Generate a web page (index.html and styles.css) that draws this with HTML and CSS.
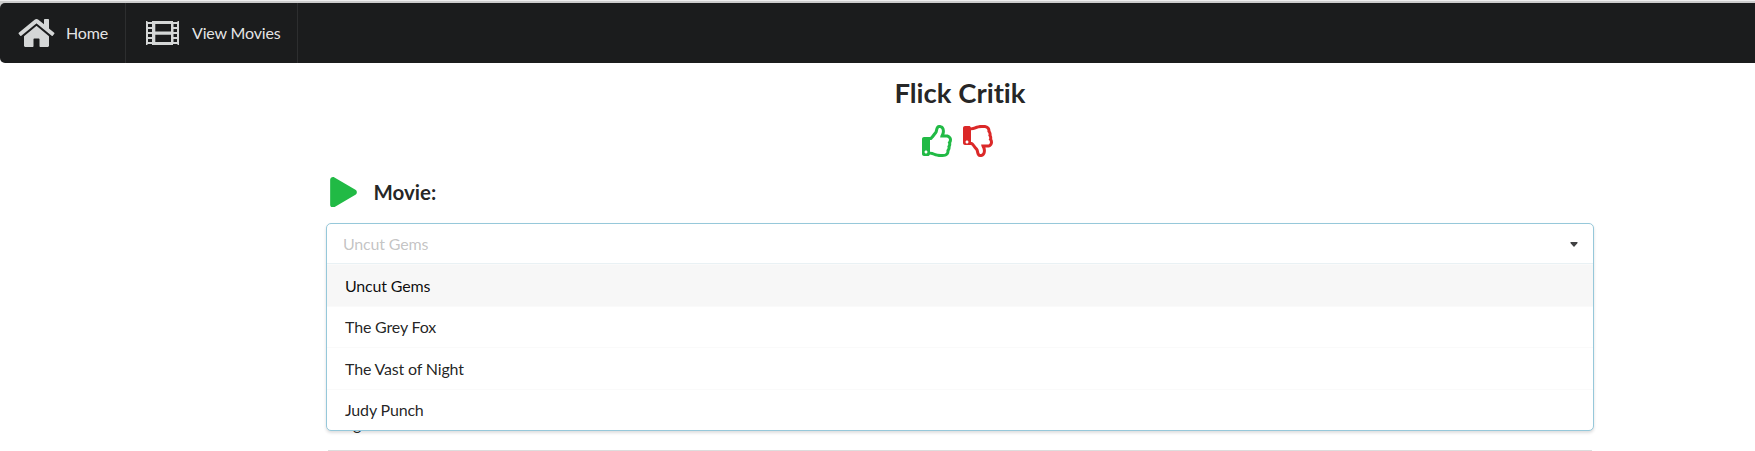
FILE: index.html
```html
<!DOCTYPE html>
<html lang="en">
<head>
<meta charset="utf-8">
<title>Flick Critik</title>
<link rel="stylesheet" href="styles.css">
</head>
<body>
<nav class="menu">
  <a class="item home">
    <svg class="icon-home" viewBox="0 0 576 512"><path d="M488 312.7V456c0 13.3-10.7 24-24 24H348c-6.600 0-12-5.400-12-12V356c0-6.600-5.400-12-12-12h-72c-6.600 0-12 5.400-12 12v112c0 6.600-5.400 12-12 12H112c-13.300 0-24-10.700-24-24V312.700c0-3.600 1.600-7 4.400-9.300l188-154.800c4.400-3.600 10.800-3.600 15.300 0l188 154.800c2.700 2.300 4.300 5.700 4.300 9.300zm83.600-60.900L488 182.900V44.400c0-6.600-5.400-12-12-12h-56c-6.600 0-12 5.400-12 12V117l-89.500-73.700c-17.700-14.600-43.300-14.600-61 0L4.400 251.800c-5.100 4.200-5.800 11.800-1.600 16.900l25.500 31c4.200 5.100 11.800 5.800 16.900 1.600l235.200-193.700c4.400-3.600 10.800-3.600 15.300 0l235.200 193.700c5.100 4.200 12.700 3.500 16.900-1.600l25.500-31c4.200-5.200 3.400-12.700-1.700-16.900z"/></svg>
    <span>Home</span>
  </a>
  <a class="item movies">
    <svg class="icon-film" viewBox="0 0 33 24"><path fill-rule="evenodd" d="M0 0H1.500V1H6V0H27V1H31.500V0H33V24H31.500V23H27V24H6V23H1.500V24H0ZM2 3V6H6V3ZM2 8V11H6V8ZM2 13V16H6V13ZM2 18V21H6V18ZM27.500 3V6H31V3ZM27.500 8V11H31V8ZM27.500 13V16H31V13ZM27.500 18V21H31V18ZM9.300 3V10.500H25V3ZM9.300 13.700V21H25V13.700Z"/></svg>
    <span>View Movies</span>
  </a>
</nav>
<main class="page">
  <h1 class="title">Flick Critik</h1>
  <div class="thumbs">
    <svg class="thumb up" viewBox="0 0 512 512"><path d="M466.270 286.690C475.040 271.840 480 256 480 236.850c0-44.015-37.218-85.580-85.820-85.580H357.700c4.920-12.810 8.850-28.130 8.850-46.540C366.550 31.936 328.860 0 271.280 0c-61.607 0-58.093 94.933-71.760 108.600-22.747 22.747-49.615 66.447-68.760 83.400H32c-17.673 0-32 14.327-32 32v240c0 17.673 14.327 32 32 32h64c14.893 0 27.408-10.174 30.978-23.950 44.509 1.001 75.060 39.940 177.802 39.940 7.220 0 15.220.010 22.220.010 77.117 0 111.986-39.423 112.940-95.330 13.319-18.425 20.299-43.122 17.340-66.999 9.854-18.452 13.664-40.343 8.990-62.990zm-61.750 53.830c12.560 21.130 1.260 49.410-13.940 57.570 7.700 48.780-17.608 65.900-53.120 65.900h-37.820c-71.639 0-118.029-37.820-171.640-37.820V240h10.920c28.360 0 67.980-70.890 94.540-97.460 28.360-28.360 18.910-75.630 37.820-94.540 47.270 0 47.270 32.980 47.270 56.730 0 39.170-28.360 56.720-28.360 94.540h103.990c21.110 0 37.730 18.910 37.820 37.820.090 18.900-12.820 37.810-22.270 37.810 13.489 14.555 16.371 45.236-5.210 65.620zM88 432c0 13.255-10.745 24-24 24s-24-10.745-24-24 10.745-24 24-24 24 10.745 24 24z"/></svg>
    <svg class="thumb down" viewBox="0 0 512 512"><path transform="matrix(1 0 0 -1 0 512)" d="M466.270 286.690C475.040 271.840 480 256 480 236.850c0-44.015-37.218-85.580-85.820-85.580H357.700c4.920-12.810 8.850-28.130 8.850-46.540C366.550 31.936 328.860 0 271.280 0c-61.607 0-58.093 94.933-71.760 108.600-22.747 22.747-49.615 66.447-68.760 83.400H32c-17.673 0-32 14.327-32 32v240c0 17.673 14.327 32 32 32h64c14.893 0 27.408-10.174 30.978-23.950 44.509 1.001 75.060 39.940 177.802 39.940 7.220 0 15.220.010 22.220.010 77.117 0 111.986-39.423 112.940-95.330 13.319-18.425 20.299-43.122 17.340-66.999 9.854-18.452 13.664-40.343 8.990-62.990zm-61.750 53.830c12.560 21.130 1.260 49.410-13.940 57.570 7.700 48.780-17.608 65.900-53.120 65.900h-37.820c-71.639 0-118.029-37.820-171.640-37.820V240h10.920c28.360 0 67.980-70.890 94.540-97.460 28.360-28.360 18.910-75.630 37.820-94.540 47.270 0 47.270 32.980 47.270 56.730 0 39.170-28.360 56.720-28.360 94.540h103.990c21.110 0 37.730 18.910 37.820 37.820.090 18.900-12.820 37.810-22.270 37.810 13.489 14.555 16.371 45.236-5.210 65.620zM88 240c0 13.255-10.745 24-24 24s-24-10.745-24-24 10.745-24 24-24 24 10.745 24 24z"/></svg>
  </div>
  <h2 class="label">
    <svg class="icon-play" viewBox="0 0 448 512"><path d="M424.400 214.700L72.400 6.600C43.800-10.300 0 6.100 0 47.900V464c0 37.500 40.700 60.100 72.400 41.300l352-208c31.400-18.500 31.500-64.100 0-82.600z"/></svg>
    <span>Movie:</span>
  </h2>
  <div class="dropdown">
    <div class="selected"><span>Uncut Gems</span><svg class="caret" viewBox="0 0 8 5"><path d="M.8 0H7.200Q8 .5 7.400 1.200L4.500 4.600Q4 5 3.500 4.600L.6 1.200Q0 .5 .8 0Z"/></svg></div>
    <ul class="options">
      <li class="option active">Uncut Gems</li>
      <li class="option">The Grey Fox</li>
      <li class="option">The Vast of Night</li>
      <li class="option">Judy Punch</li>
    </ul>
  </div>
  <div class="covered">g</div>
  <div class="rule"></div>
</main>
</body>
</html>
```
FILE: styles.css
```css
* { box-sizing: border-box; }
body {
  margin: 0;
  height: 451px;
  overflow: hidden;
  background: #fff;
  border-top: 1px solid #eee;
  font: 16px/20px Lato, sans-serif;
  font-variant-ligatures: none;
  letter-spacing: -.17px;
  color: rgba(0, 0, 0, .87);
}
svg { display: block; flex: none; }
.menu {
  display: flex;
  height: 62px;
  border-top: 2px solid #ccc;
  background: linear-gradient(#ccc, #ccc) top / 100% 5px no-repeat;
}
.menu::after { content: ""; flex: 1; background: #1b1c1d; }
.item {
  display: flex;
  align-items: center;
  background: #1b1c1d;
  border-right: 1px solid #2d2e2f;
  color: rgba(255, 255, 255, .9);
}
.item svg { fill: #d5d7d7; }
.home { width: 126px; padding-left: 18px; gap: 11px; border-radius: 5px 0 0 5px; }
.movies { width: 172px; padding-left: 20px; gap: 13px; }
.icon-home { width: 37px; height: 32px; }
.icon-film { width: 33px; height: 24px; }
.page { width: 1268px; margin-left: 326px; }
.title { margin: 0; padding-top: 12px; font-size: 27.5px; line-height: 36px; letter-spacing: 0; text-align: center; }
.thumbs { display: flex; gap: 9px; margin: 14px 0 0 595.500px; }
.thumb { width: 32px; height: 32px; }
.up { fill: #21ba45; }
.down { fill: #db2828; }
.label { display: flex; align-items: center; gap: 16.500px; height: 30px; margin: 20px 0 16px; padding-left: 4px; font-size: 20.500px; letter-spacing: 0; }
.icon-play { width: 27px; height: 30.500px; fill: #21ba45; }
.dropdown {
  position: relative;
  z-index: 1;
  height: 208px;
  background: #fff;
  border: 1px solid #96c8da;
  border-radius: 5px;
  box-shadow: 0 2px 3px rgba(34, 36, 38, .15);
  overflow: hidden;
}
.selected { display: flex; align-items: center; justify-content: space-between; height: 40px; padding: 0 15.500px 0 16px; border-bottom: 1px solid #e9f1f4; color: rgba(115, 115, 115, .43); }
.caret { width: 8px; height: 5px; margin-top: 1px; fill: #414243; }
.options { margin: 0; padding: 0; list-style: none; }
.option { height: 41.500px; padding: 10.500px 18px; border-top: 1px solid #fafafa; }
.active { padding-top: 11px; background: #f7f7f7; color: rgba(0, 0, 0, .95); }
/* Next field's label, mostly hidden behind the open menu */
.covered { height: 20px; margin: -17px 0 0 27px; }
.rule { height: 2px; margin: 16px 2px 0; background: #ddd; }
```
